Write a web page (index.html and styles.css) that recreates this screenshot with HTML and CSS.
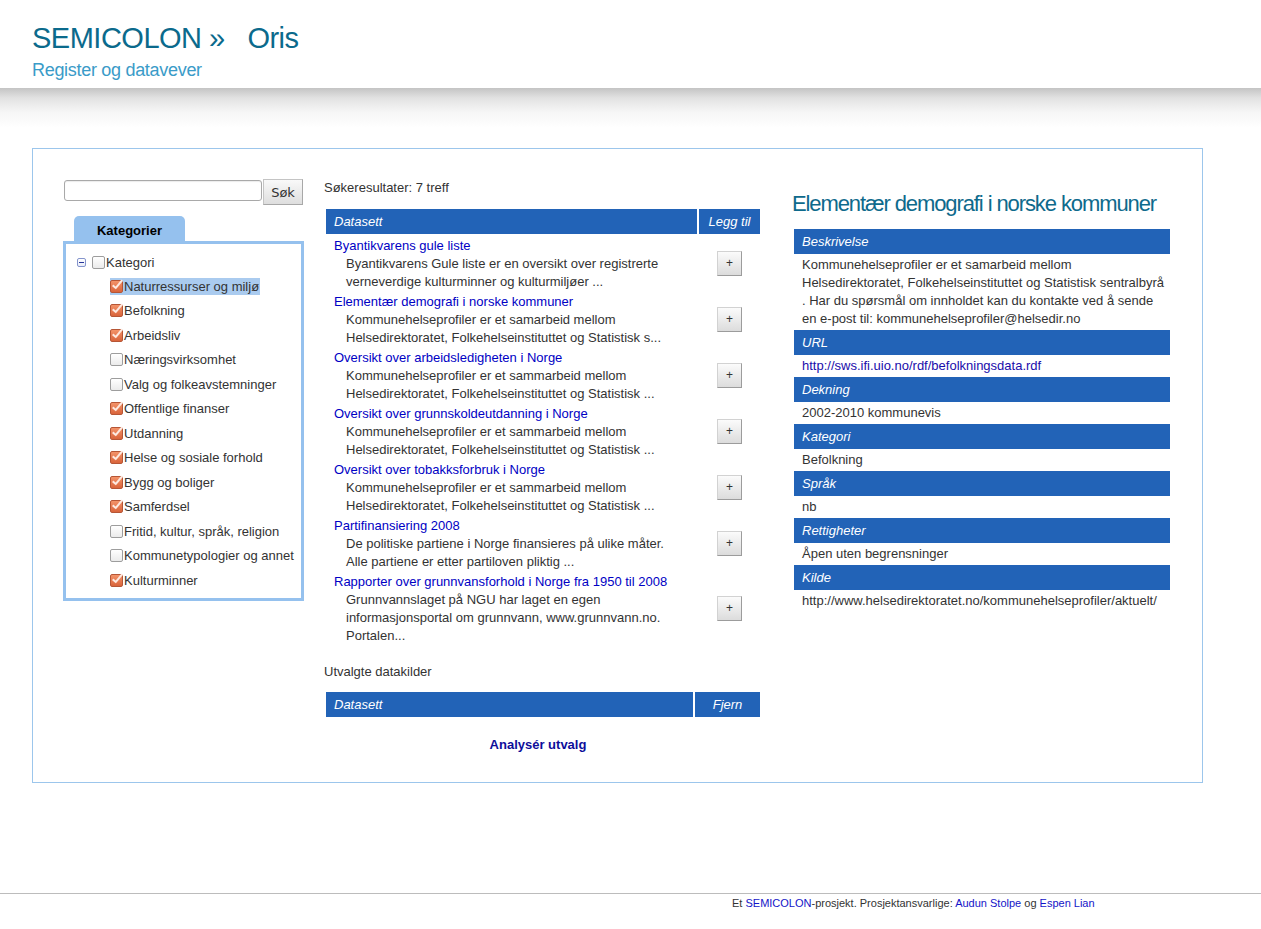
FILE: index.html
```html
<!DOCTYPE html>
<html lang="no">
<head>
<meta charset="utf-8">
<title>SEMICOLON » Oris</title>
<link rel="stylesheet" href="styles.css">
</head>
<body>
<header class="site-header">
  <h1 class="site-title">SEMICOLON »&nbsp;&nbsp; Oris</h1>
  <div class="site-subtitle">Register og datavever</div>
</header>
<div class="header-shadow"></div>

<main class="panel">
  <aside class="col-left">
    <div class="search">
      <input class="search-input" type="text">
      <button class="search-btn" type="button">Søk</button>
    </div>
    <div class="tab">Kategorier</div>
    <div class="tree">
      <div class="tree-root"><span class="exp"></span><span class="cb"></span><span>Kategori</span></div>
      <ul class="tree-children">
        <li><span class="hl"><span class="cb on"></span>Naturressurser og miljø</span></li>
        <li><span class="cb on"></span>Befolkning</li>
        <li><span class="cb on"></span>Arbeidsliv</li>
        <li><span class="cb"></span>Næringsvirksomhet</li>
        <li><span class="cb"></span>Valg og folkeavstemninger</li>
        <li><span class="cb on"></span>Offentlige finanser</li>
        <li><span class="cb on"></span>Utdanning</li>
        <li><span class="cb on"></span>Helse og sosiale forhold</li>
        <li><span class="cb on"></span>Bygg og boliger</li>
        <li><span class="cb on"></span>Samferdsel</li>
        <li><span class="cb"></span>Fritid, kultur, språk, religion</li>
        <li><span class="cb"></span>Kommunetypologier og annet</li>
        <li><span class="cb on"></span>Kulturminner</li>
      </ul>
    </div>
  </aside>

  <section class="col-mid">
    <div class="label">Søkeresultater: 7 treff</div>
    <table class="results">
      <thead>
        <tr><th class="c1">Datasett</th><th class="c2">Legg til</th></tr>
      </thead>
      <tbody>
        <tr>
          <td class="c1"><a class="ds-link" href="#">Byantikvarens gule liste</a><div class="desc">Byantikvarens Gule liste er en oversikt over registrerte verneverdige kulturminner og kulturmiljøer ...</div></td>
          <td class="c2"><button class="btn-add" type="button">+</button></td>
        </tr>
        <tr>
          <td class="c1"><a class="ds-link" href="#">Elementær demografi i norske kommuner</a><div class="desc">Kommunehelseprofiler er et samarbeid mellom Helsedirektoratet, Folkehelseinstituttet og Statistisk s...</div></td>
          <td class="c2"><button class="btn-add" type="button">+</button></td>
        </tr>
        <tr>
          <td class="c1"><a class="ds-link" href="#">Oversikt over arbeidsledigheten i Norge</a><div class="desc">Kommunehelseprofiler er et sammarbeid mellom Helsedirektoratet, Folkehelseinstituttet og Statistisk ...</div></td>
          <td class="c2"><button class="btn-add" type="button">+</button></td>
        </tr>
        <tr>
          <td class="c1"><a class="ds-link" href="#">Oversikt over grunnskoldeutdanning i Norge</a><div class="desc">Kommunehelseprofiler er et sammarbeid mellom Helsedirektoratet, Folkehelseinstituttet og Statistisk ...</div></td>
          <td class="c2"><button class="btn-add" type="button">+</button></td>
        </tr>
        <tr>
          <td class="c1"><a class="ds-link" href="#">Oversikt over tobakksforbruk i Norge</a><div class="desc">Kommunehelseprofiler er et sammarbeid mellom Helsedirektoratet, Folkehelseinstituttet og Statistisk ...</div></td>
          <td class="c2"><button class="btn-add" type="button">+</button></td>
        </tr>
        <tr>
          <td class="c1"><a class="ds-link" href="#">Partifinansiering 2008</a><div class="desc">De politiske partiene i Norge finansieres på ulike måter. Alle partiene er etter partiloven pliktig ...</div></td>
          <td class="c2"><button class="btn-add" type="button">+</button></td>
        </tr>
        <tr>
          <td class="c1"><a class="ds-link" href="#">Rapporter over grunnvansforhold i Norge fra 1950 til 2008</a><div class="desc">Grunnvannslaget på NGU har laget en egen informasjonsportal om grunnvann, www.grunnvann.no. Portalen...</div></td>
          <td class="c2"><button class="btn-add" type="button">+</button></td>
        </tr>
      </tbody>
    </table>

    <div class="label label-sel">Utvalgte datakilder</div>
    <table class="selected">
      <thead>
        <tr><th class="c1">Datasett</th><th class="c2">Fjern</th></tr>
      </thead>
    </table>

    <div class="analyse"><a href="#">Analysér utvalg</a></div>
  </section>

  <section class="col-right">
    <h2 class="ds-title">Elementær demografi i norske kommuner</h2>
    <table class="meta">
      <tr><th>Beskrivelse</th></tr>
      <tr><td>Kommunehelseprofiler er et samarbeid mellom Helsedirektoratet, Folkehelseinstituttet og Statistisk sentralbyrå . Har du spørsmål om innholdet kan du kontakte ved å sende en e-post til: kommunehelseprofiler@helsedir.no</td></tr>
      <tr><th>URL</th></tr>
      <tr><td><a href="#">http://sws.ifi.uio.no/rdf/befolkningsdata.rdf</a></td></tr>
      <tr><th>Dekning</th></tr>
      <tr><td>2002-2010 kommunevis</td></tr>
      <tr><th>Kategori</th></tr>
      <tr><td>Befolkning</td></tr>
      <tr><th>Språk</th></tr>
      <tr><td>nb</td></tr>
      <tr><th>Rettigheter</th></tr>
      <tr><td>Åpen uten begrensninger</td></tr>
      <tr><th>Kilde</th></tr>
      <tr><td>http://www.helsedirektoratet.no/kommunehelseprofiler/aktuelt/</td></tr>
    </table>
  </section>
</main>

<footer class="site-footer">
  <p>Et <a href="#">SEMICOLON</a>-prosjekt. Prosjektansvarlige: <a href="#">Audun Stolpe</a> og <a href="#">Espen Lian</a></p>
</footer>
</body>
</html>
```

FILE: styles.css
```css
html, body {
  margin: 0;
  padding: 0;
  background: #fff;
}

body {
  font-family: "Liberation Sans", Arial, sans-serif;
  font-size: 13px;
  color: #333;
}

a {
  text-decoration: none;
}

/* ---------- header ---------- */
.site-header {
  height: 88px;
  box-sizing: border-box;
  padding: 22px 0 0 32px;
}

.site-title {
  margin: 0;
  font-size: 29px;
  line-height: 33px;
  font-weight: normal;
  letter-spacing: -0.5px;
  color: #0b6a8c;
}

.site-subtitle {
  margin-top: 5px;
  font-size: 18px;
  line-height: 21px;
  letter-spacing: -0.3px;
  color: #3a9bc8;
}

.header-shadow {
  height: 40px;
  background: linear-gradient(to bottom, #c4c4c4 0, #e2e2e2 10px, #f6f6f6 24px, #fff 40px);
}

/* ---------- main panel ---------- */
.panel {
  display: flex;
  align-items: flex-start;
  margin: 20px 0 0 32px;
  width: 1171px;
  box-sizing: border-box;
  border: 1px solid #9cc6ec;
  padding: 30px 0 28px 30px;
}

.col-left {
  width: 241px;
  flex: none;
}

.col-mid {
  width: 438px;
  flex: none;
  margin-left: 20px;
}

.col-right {
  width: 380px;
  flex: none;
  margin-left: 30px;
}

/* ---------- search ---------- */
.search {
  display: flex;
  align-items: flex-start;
}

.search-input {
  width: 198px;
  height: 21px;
  box-sizing: border-box;
  margin: 1px 0 0 1px;
  padding: 0 3px;
  border: 1px solid #a9a9a9;
  border-radius: 3px;
  background: #fff;
  box-shadow: inset 0 1px 1px rgba(0, 0, 0, 0.08);
}

.search-btn {
  width: 40px;
  height: 26px;
  box-sizing: border-box;
  margin-left: 1px;
  padding: 0;
  border: 1px solid #c4c4c4;
  border-right-color: #a8a8a8;
  border-bottom-color: #a8a8a8;
  background: linear-gradient(#f9f9f9, #dedede);
  font-family: "DejaVu Sans", "Liberation Sans", sans-serif;
  font-size: 13px;
  color: #333;
}

/* ---------- categories ---------- */
.tab {
  width: 111px;
  height: 25px;
  margin: 11px 0 0 11px;
  background: #95c1ee;
  border-radius: 5px 5px 0 0;
  font-weight: bold;
  color: #000;
  text-align: center;
  line-height: 29px;
}

.tree {
  border: 3px solid #95c1ee;
  padding: 6px 0 5px 0;
}

.tree-root {
  display: flex;
  align-items: center;
  height: 24px;
  padding-left: 11px;
}

.tree-children {
  list-style: none;
  margin: 0;
  padding: 0 0 0 44px;
}

.tree-children li {
  display: flex;
  align-items: center;
  height: 24.5px;
}

.hl {
  display: inline-flex;
  align-items: center;
  height: 17px;
  padding-right: 1px;
  background: #aacbef;
}

.exp {
  position: relative;
  display: inline-block;
  flex: none;
  width: 9px;
  height: 9px;
  box-sizing: border-box;
  margin-right: 6px;
  border: 1px solid #8494cc;
  border-radius: 2px;
  background: linear-gradient(#fff, #e8ecf8);
}

.exp::after {
  content: "";
  position: absolute;
  left: 1px;
  right: 1px;
  top: 3px;
  height: 1px;
  background: #27359a;
}

.cb {
  position: relative;
  display: inline-block;
  flex: none;
  width: 13px;
  height: 13px;
  box-sizing: border-box;
  margin-right: 1px;
  border: 1px solid #9d9d9d;
  border-radius: 2px;
  background: linear-gradient(#fff, #ebebeb);
}

.cb.on {
  border-color: #b65636;
  background: linear-gradient(#f39369, #d9643b);
}

.cb.on::after {
  content: "";
  position: absolute;
  left: 4px;
  top: -3px;
  width: 3px;
  height: 9px;
  border: solid #fde9e0;
  border-width: 0 2px 2px 0;
  transform: rotate(40deg);
  filter: drop-shadow(0.5px 0.5px 0 #6a3220);
}

/* ---------- middle ---------- */
.label {
  line-height: 18px;
}

.label-sel {
  margin-top: 17px;
}

.results,
.selected {
  width: 438px;
  table-layout: fixed;
  border-spacing: 2px;
  margin-top: 10px;
}

.selected {
  margin-top: 9px;
}

.results th,
.selected th,
.meta th {
  background: #2263b7;
  color: #fff;
  font-style: italic;
  font-weight: normal;
  line-height: 25px;
  padding: 0 8px;
  text-align: left;
}

.results th.c2 {
  width: 61px;
  padding: 0;
  text-align: center;
}

.selected th.c2 {
  width: 65px;
  padding: 0;
  text-align: center;
}

.results td {
  padding: 1px 8px 0 8px;
  line-height: 18px;
  vertical-align: top;
}

.results td.c2 {
  padding: 0;
  vertical-align: middle;
}

.ds-link {
  display: block;
  color: #0000c4;
}

.desc {
  padding: 0 8px 0 12px;
  margin-bottom: -1px;
}

.btn-add {
  display: block;
  width: 25px;
  height: 25px;
  box-sizing: border-box;
  margin: 0 auto;
  padding: 0;
  border: 1px solid #d2d2d2;
  border-right-color: #9c9c9c;
  border-bottom-color: #9c9c9c;
  background: linear-gradient(#fbfbfb, #dcdcdc);
  font-family: "Liberation Sans", Arial, sans-serif;
  font-size: 12px;
  color: #333;
}

.analyse {
  margin-top: 17px;
  padding-right: 10px;
  text-align: center;
  line-height: 18px;
}

.analyse a {
  font-weight: bold;
  color: #0d0d9a;
}

/* ---------- right ---------- */
.ds-title {
  margin: 12px 0 0 0;
  font-size: 22px;
  line-height: 25px;
  font-weight: normal;
  letter-spacing: -1.1px;
  color: #0e6a8c;
}

.meta {
  width: 380px;
  border-spacing: 2px;
  margin-top: 11px;
}

.meta td {
  padding: 0 4px 0 8px;
  line-height: 18px;
}

.meta td a {
  color: #1a0dab;
}

/* ---------- footer ---------- */
.site-footer {
  margin-top: 110px;
  border-top: 1px solid #bcbcbc;
}

.site-footer p {
  margin: 0;
  padding: 3px 0 0 732px;
  font-size: 11px;
  line-height: 13px;
  color: #333;
}

.site-footer a {
  color: #1414c8;
}
```
